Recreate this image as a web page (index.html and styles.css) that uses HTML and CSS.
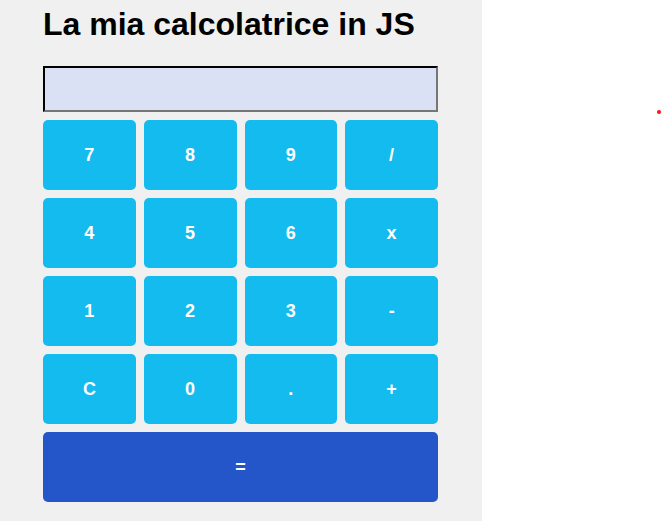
FILE: index.html
```html
<!DOCTYPE html>
<html lang="it">
<head>
<meta charset="utf-8">
<title>Calcolatrice</title>
<link rel="stylesheet" href="styles.css">
</head>
<body>
<main class="calc">
  <h1 class="title">La mia calcolatrice in JS</h1>
  <input class="display" type="text" readonly>
  <div class="keys">
    <button class="key">7</button>
    <button class="key">8</button>
    <button class="key">9</button>
    <button class="key">/</button>
    <button class="key">4</button>
    <button class="key">5</button>
    <button class="key">6</button>
    <button class="key">x</button>
    <button class="key">1</button>
    <button class="key">2</button>
    <button class="key">3</button>
    <button class="key">-</button>
    <button class="key">C</button>
    <button class="key">0</button>
    <button class="key">.</button>
    <button class="key">+</button>
    <button class="key key-equals">=</button>
  </div>
</main>
<span class="dot"></span>
</body>
</html>
```
FILE: styles.css
```css
html, body {
  margin: 0;
  padding: 0;
  background: #ffffff;
  font-family: "Liberation Sans", Arial, sans-serif;
}

.calc {
  width: 482px;
  min-height: 521px;
  box-sizing: border-box;
  background: #f0f0f0;
  padding: 6px 0 0 43px;
}

.title {
  margin: 0;
  font-size: 32px;
  line-height: 37px;
  font-weight: bold;
  color: #000;
}

.display {
  display: block;
  box-sizing: border-box;
  width: 395px;
  height: 46px;
  margin: 23px 0 8px 0;
  border: 2px inset #767676;
  border-top-color: #222;
  border-left-color: #222;
  background: #dbe1f4;
  padding: 0 4px;
  font-size: 20px;
}

.keys {
  width: 395px;
  display: grid;
  grid-template-columns: repeat(4, 1fr);
  grid-auto-rows: 70px;
  gap: 8px;
}

.key {
  border: none;
  border-radius: 5px;
  background: #13bbee;
  color: #ffffff;
  font-family: "Liberation Sans", Arial, sans-serif;
  font-size: 18px;
  font-weight: bold;
  padding: 0;
}

.key-equals {
  grid-column: 1 / -1;
  background: #2455c9;
}

.dot {
  position: absolute;
  left: 657px;
  top: 110px;
  width: 4px;
  height: 4px;
  border-radius: 50%;
  background: #ff1010;
}
```
